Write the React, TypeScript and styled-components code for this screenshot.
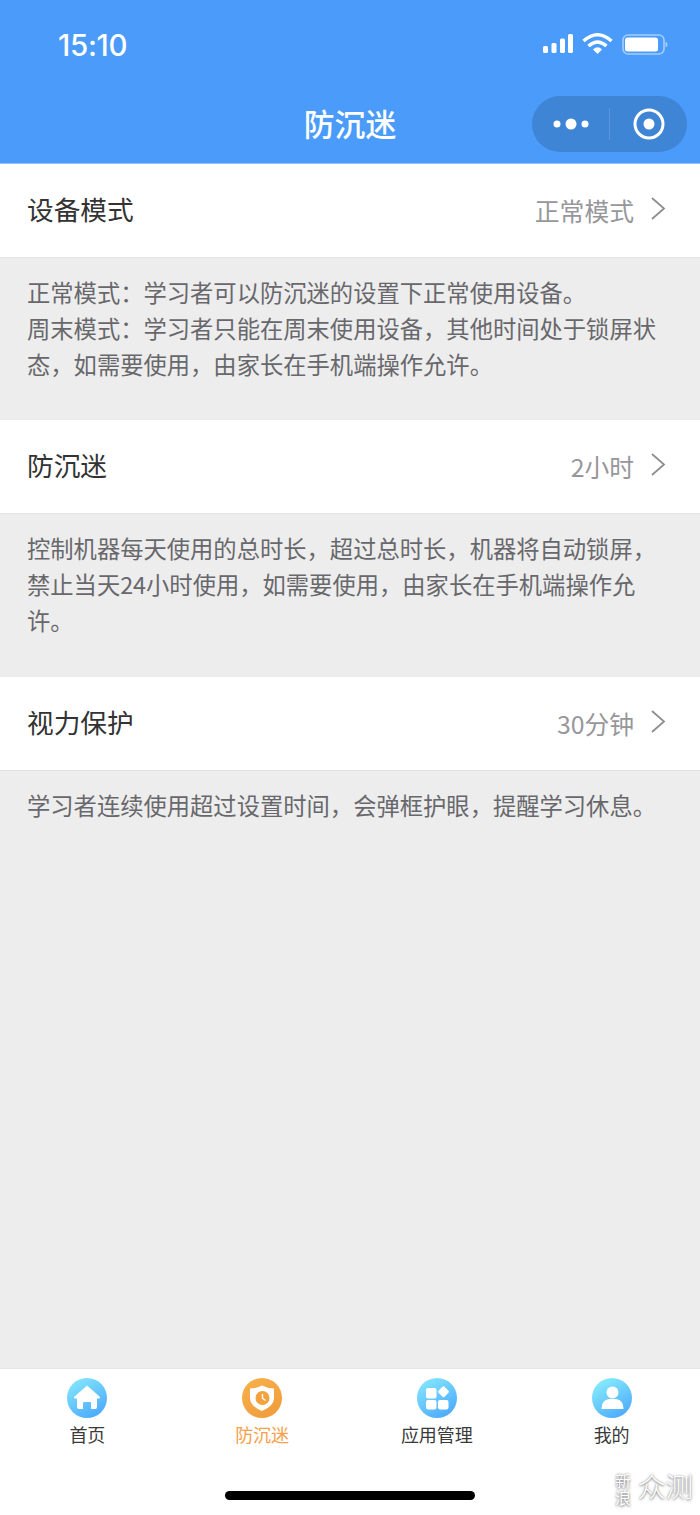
import React from "react";
import styled, { createGlobalStyle } from "styled-components";

const Global = createGlobalStyle`
  html, body { margin: 0; padding: 0; }
  body { font-family: "Noto Sans CJK SC", "Liberation Sans", sans-serif; background: #ededed; }
`;

const Page = styled.div`
  width: 700px;
  height: 1515px;
  display: flex;
  flex-direction: column;
  background: #ededed;
  overflow: hidden;
`;

const Header = styled.header`
  height: 163px;
  flex: none;
  background: #4a9bfa;
  display: flex;
  flex-direction: column;
  color: #fff;
  border-bottom: 1px solid #92c1fb;
`;

const StatusBar = styled.div`
  height: 86px;
  padding: 0 32px 0 58px;
  display: flex;
  align-items: center;
  justify-content: space-between;
  box-sizing: border-box;
`;

const Clock = styled.span`
  font-family: Inter, "Liberation Sans", sans-serif;
  font-size: 29.5px;
  font-weight: 500;
  letter-spacing: -0.3px;
  position: relative;
  top: 2px;
`;

const StatusIcons = styled.svg`
  display: block;
  position: relative;
  top: 1px;
`;

const NavBar = styled.div`
  height: 76px;
  position: relative;
  display: flex;
  align-items: center;
  justify-content: center;
`;

const Title = styled.h1`
  margin: 0;
  font-size: 30.8px;
  font-weight: 500;
  line-height: 1;
  position: relative;
  top: -1px;
`;

const Capsule = styled.div`
  position: absolute;
  right: 13px;
  top: 10px;
  width: 155px;
  height: 56px;
  border-radius: 28px;
  background: #3f85d5;
  display: flex;
  align-items: center;
`;

const CapsuleHalf = styled.div`
  flex: 1;
  height: 100%;
  display: flex;
  align-items: center;
  justify-content: center;
`;

const CapsuleRule = styled.div`
  width: 1px;
  height: 32px;
  background: #5a97dd;
`;

const Main = styled.main`
  flex: 1;
  min-height: 0;
`;

const Row = styled.div`
  height: 94px;
  box-sizing: border-box;
  background: #fff;
  border-bottom: 1px solid #e2e2e6;
  padding: 0 34px 0 27px;
  display: flex;
  align-items: center;
  justify-content: space-between;
`;

const RowLabel = styled.span`
  font-size: 26.7px;
  color: #333;
  line-height: 1;
  position: relative;
  top: -1px;
`;

const RowValue = styled.span`
  display: flex;
  align-items: center;
  gap: 16px;
  font-size: 24.8px;
  color: #97979b;
  line-height: 1;
`;

const Chevron = styled.svg`
  display: block;
  position: relative;
  top: -2px;
`;

const Note = styled.p<{ $gap: number }>`
  margin: 0 0 ${(p) => p.$gap}px;
  padding: 16px 27px 0;
  font-size: 23.3px;
  line-height: 36px;
  color: #68686c;
  white-space: nowrap;
`;

const TabBar = styled.nav`
  height: 147px;
  flex: none;
  background: #fff;
  border-top: 1px solid #e4e4e4;
  box-sizing: border-box;
  position: relative;
  display: grid;
  grid-template-columns: repeat(4, 1fr);
  align-items: start;
  padding: 9px 1px 0 0;
`;

const Tab = styled.div`
  display: flex;
  flex-direction: column;
  align-items: center;
`;

const TabLabel = styled.span<{ $active?: boolean }>`
  font-size: 18px;
  line-height: 26px;
  margin-top: 3px;
  color: ${(p) => (p.$active ? "#f5a04a" : "#3a3a3a")};
`;

const HomeIndicator = styled.div`
  position: absolute;
  left: 225px;
  bottom: 15px;
  width: 250px;
  height: 9px;
  border-radius: 5px;
  background: #000;
`;

const Watermark = styled.div`
  position: absolute;
  right: 7px;
  bottom: 9px;
  display: flex;
  align-items: flex-start;
  gap: 7px;
  color: #fff;
  text-shadow: 0 1px 3px rgba(0, 0, 0, 0.5), 0 0 2px rgba(0, 0, 0, 0.3);
  line-height: 1;
`;

const WatermarkSmall = styled.span`
  font-size: 16px;
  width: 16px;
  line-height: 17px;
  white-space: normal;
`;

const WatermarkBig = styled.span`
  font-size: 27.5px;
  font-weight: 300;
`;

const Arrow = () => (
  <Chevron width="16" height="24" viewBox="0 0 16 24" fill="none">
    <path d="M2 2 L14 12.5 L2 23" stroke="#8e8e92" strokeWidth="1.8" />
  </Chevron>
);

const Badge = ({ id, from, to, children }: { id: string; from: string; to: string; children: React.ReactNode }) => (
  <svg width="40" height="40" viewBox="0 0 40 40">
    <defs>
      <linearGradient id={id} x1="0.2" y1="0" x2="0.8" y2="1">
        <stop offset="0" stopColor={from} />
        <stop offset="1" stopColor={to} />
      </linearGradient>
    </defs>
    <circle cx="20" cy="20" r="20" fill={`url(#${id})`} />
    {children}
  </svg>
);

const tabs = [
  {
    label: "首页",
    icon: (
      <Badge id="g1" from="#84e6fd" to="#4aa8fb">
        <path d="M20 7.5 L33 19 Q33.6 20.5 31.5 20.5 L30 20.5 L30 29 Q30 31 28 31 L24 31 L24 25 Q24 24 23 24 L17 24 Q16 24 16 25 L16 31 L12 31 Q10 31 10 29 L10 20.5 L8.5 20.5 Q6.4 20.5 7 19 Z" fill="#fff" />
      </Badge>
    ),
  },
  {
    label: "防沉迷",
    active: true,
    icon: (
      <Badge id="g2" from="#f6b04a" to="#f19c3c">
        <path d="M20 7.5 Q26 10.5 32 10.5 L32 20 Q32 28 20 33 Q8 28 8 20 L8 10.5 Q14 10.5 20 7.5 Z" fill="#fff" />
        <circle cx="20.5" cy="20" r="7" fill="#f2a23f" />
        <path d="M20.5 16 L20.5 20.2 L23.5 22.5" stroke="#fff" strokeWidth="1.4" fill="none" />
      </Badge>
    ),
  },
  {
    label: "应用管理",
    icon: (
      <Badge id="g3" from="#84e6fd" to="#4aa8fb">
        <rect x="9" y="10" width="10.5" height="10.5" rx="2" fill="#fff" />
        <rect x="9" y="22" width="10.5" height="9.5" rx="2" fill="#fff" />
        <rect x="21" y="22" width="10.5" height="9.5" rx="2" fill="#fff" />
        <rect x="22.2" y="9.5" width="8.5" height="8.5" rx="1.5" fill="#fff" transform="rotate(45 26.5 13.8)" />
      </Badge>
    ),
  },
  {
    label: "我的",
    icon: (
      <Badge id="g4" from="#8aeefd" to="#4aa8fb">
        <circle cx="20.5" cy="14.5" r="6" fill="#fff" />
        <path d="M9.5 31 Q9.5 22 17 21 L24 21 Q31.5 22 31.5 31 Z" fill="#fff" />
      </Badge>
    ),
  },
];

export default function App() {
  return (
    <Page>
      <Global />
      <Header>
        <StatusBar>
          <Clock>15:10</Clock>
          <StatusIcons width="126" height="24" viewBox="0 0 126 24" fill="none">
            <rect x="1" y="14" width="5" height="7" rx="1.5" fill="#fff" />
            <rect x="9.5" y="11" width="5" height="10" rx="1.5" fill="#fff" />
            <rect x="18" y="6.5" width="5" height="14.5" rx="1.5" fill="#fff" />
            <rect x="26" y="2" width="5" height="19" rx="1.5" fill="#fff" />
            <path d="M41.5 9 Q55.5 -3.5 69.5 9" stroke="#fff" strokeWidth="3.4" />
            <path d="M46.5 14 Q55.5 6 64.5 14" stroke="#fff" strokeWidth="3.4" />
            <path d="M51 17.5 Q55.5 13 60 17.5 L55.5 22 Z" fill="#fff" />
            <rect x="81" y="3" width="41" height="19" rx="5" stroke="#a5cdfc" strokeWidth="1.6" />
            <rect x="83" y="5.5" width="33" height="14" rx="2.5" fill="#fff" />
            <path d="M123.5 9.5 Q125.5 10.5 125.5 12.5 Q125.5 14.5 123.5 15.5 Z" fill="#a5cdfc" />
          </StatusIcons>
        </StatusBar>
        <NavBar>
          <Title>防沉迷</Title>
          <Capsule>
            <CapsuleHalf>
              <svg width="36" height="14" viewBox="0 0 36 14">
                <circle cx="4" cy="7" r="3.5" fill="#fff" />
                <circle cx="18" cy="7" r="5.5" fill="#fff" />
                <circle cx="32" cy="7" r="3.5" fill="#fff" />
              </svg>
            </CapsuleHalf>
            <CapsuleRule />
            <CapsuleHalf>
              <svg width="32" height="32" viewBox="0 0 32 32">
                <circle cx="16" cy="16" r="14" stroke="#fff" strokeWidth="3" fill="none" />
                <circle cx="16" cy="16" r="5.5" fill="#fff" />
              </svg>
            </CapsuleHalf>
          </Capsule>
        </NavBar>
      </Header>
      <Main>
        <Row>
          <RowLabel>设备模式</RowLabel>
          <RowValue>正常模式<Arrow /></RowValue>
        </Row>
        <Note $gap={38}>
          正常模式：学习者可以防沉迷的设置下正常使用设备。<br />
          周末模式：学习者只能在周末使用设备，其他时间处于锁屏状<br />
          态，如需要使用，由家长在手机端操作允许。
        </Note>
        <Row>
          <RowLabel>防沉迷</RowLabel>
          <RowValue>2小时<Arrow /></RowValue>
        </Row>
        <Note $gap={39}>
          控制机器每天使用的总时长，超过总时长，机器将自动锁屏，<br />
          禁止当天24小时使用，如需要使用，由家长在手机端操作允<br />
          许。
        </Note>
        <Row>
          <RowLabel>视力保护</RowLabel>
          <RowValue>30分钟<Arrow /></RowValue>
        </Row>
        <Note $gap={0}>学习者连续使用超过设置时间，会弹框护眼，提醒学习休息。</Note>
      </Main>
      <TabBar>
        {tabs.map((t) => (
          <Tab key={t.label}>
            {t.icon}
            <TabLabel $active={t.active}>{t.label}</TabLabel>
          </Tab>
        ))}
        <HomeIndicator />
        <Watermark>
          <WatermarkSmall>新浪</WatermarkSmall>
          <WatermarkBig>众测</WatermarkBig>
        </Watermark>
      </TabBar>
    </Page>
  );
}
